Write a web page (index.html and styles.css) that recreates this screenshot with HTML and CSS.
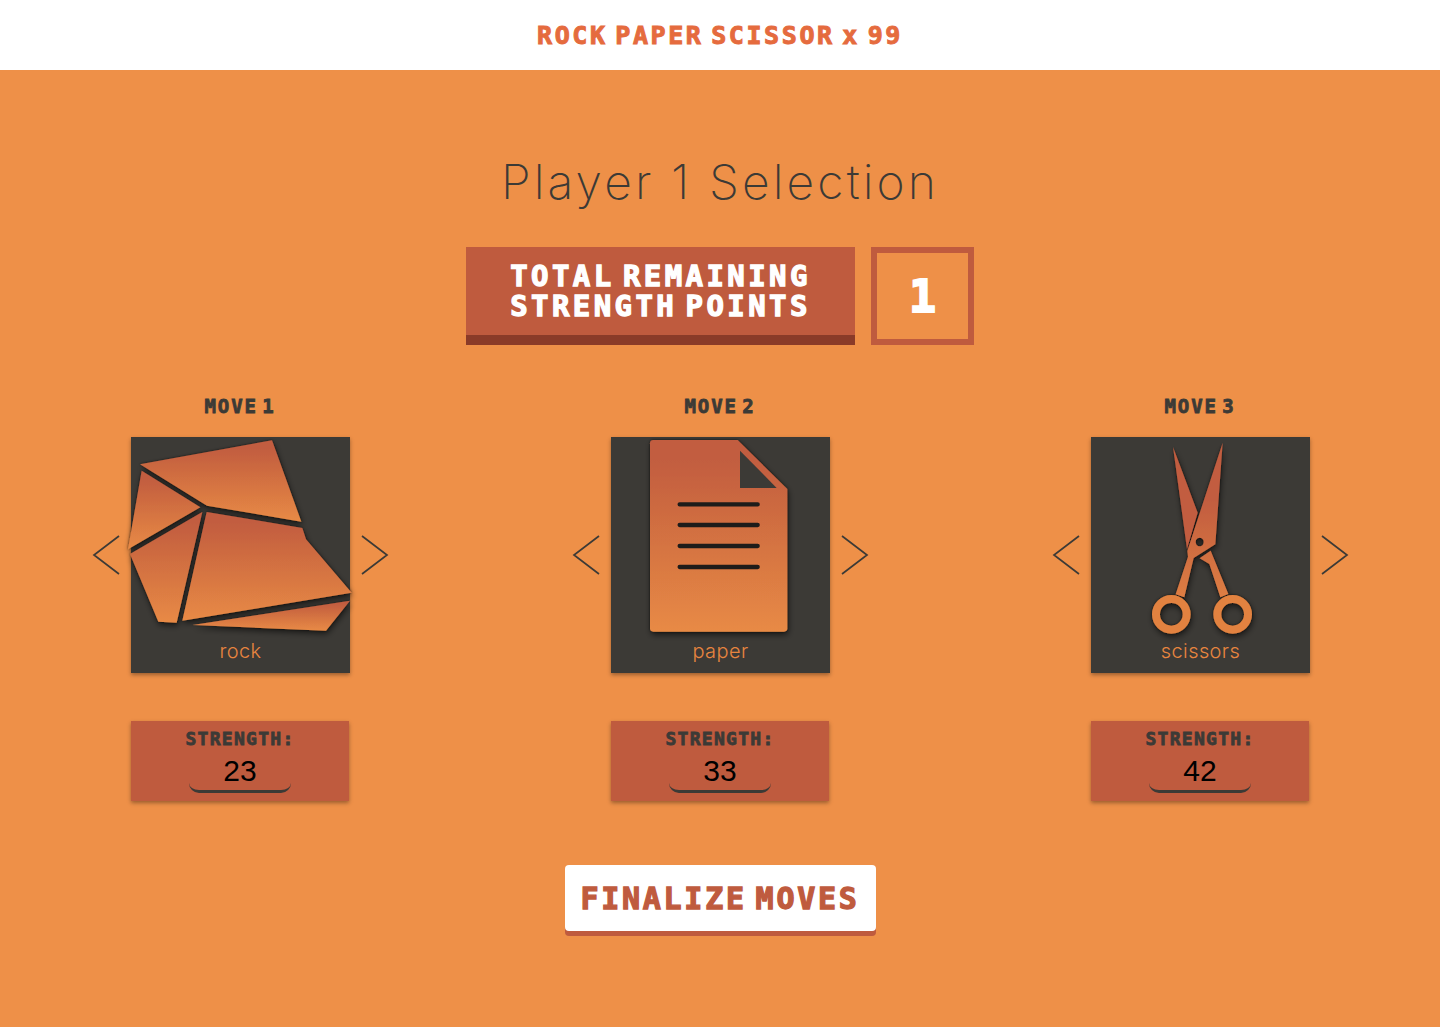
FILE: index.html
```html
<!DOCTYPE html>
<html lang="en">
<head>
<meta charset="utf-8">
<title>Rock Paper Scissor x 99</title>
<link rel="stylesheet" href="styles.css">
</head>
<body>
<header class="topbar"><span class="brand">ROCK PAPER SCISSOR x 99</span></header>
<main class="stage">
  <h1 class="title">Player 1 Selection</h1>
  <section class="points">
    <div class="points-label">TOTAL REMAINING<br>STRENGTH POINTS</div>
    <div class="points-value">1</div>
  </section>
  <section class="moves">
    <article class="move">
      <h2 class="move-title">MOVE 1</h2>
      <div class="picker">
        <svg class="arrow" viewBox="0 0 28 42"><path d="M27 2 2 21 27 40"/></svg>
        <div class="card">
          <svg class="art" viewBox="123 141 657 708">
            <defs>
              <linearGradient id="g" x1="0" y1="0" x2="0" y2="1"><stop offset="0.1" stop-color="#c25d3f"/><stop offset="1" stop-color="#e88a45"/></linearGradient>
              <filter id="s" x="-20%" y="-20%" width="140%" height="140%">
                <feGaussianBlur in="SourceAlpha" stdDeviation="3" result="tight"/>
                <feOffset in="SourceAlpha" dx="4" dy="8" result="moved"/>
                <feGaussianBlur in="moved" stdDeviation="9" result="soft"/>
                <feComponentTransfer in="soft" result="softDim"><feFuncA type="linear" slope=".6"/></feComponentTransfer>
                <feComponentTransfer in="tight" result="tightDim"><feFuncA type="linear" slope=".6"/></feComponentTransfer>
                <feMerge><feMergeNode in="softDim"/><feMergeNode in="tightDim"/><feMergeNode in="SourceGraphic"/></feMerge>
              </filter>
            </defs>
            <g filter="url(#s)" fill="url(#g)">
              <polygon points="150,223 546,151 634,395 351,347"/>
              <polygon points="155,242 331,352 114,478"/>
              <polygon points="337,366 260,698 205,695 120,492"/>
              <polygon points="350,366 637,414 648,448 785,608 277,692"/>
              <polygon points="780,632 708,722 308,705"/>
            </g>
          </svg>
          <span class="card-name">rock</span>
        </div>
        <svg class="arrow" viewBox="0 0 28 42"><path d="M1 2 26 21 1 40"/></svg>
      </div>
      <div class="strength"><span class="strength-label">STRENGTH:</span><div class="strength-input">23</div></div>
    </article>
    <article class="move">
      <h2 class="move-title">MOVE 2</h2>
      <div class="picker">
        <svg class="arrow" viewBox="0 0 28 42"><path d="M27 2 2 21 27 40"/></svg>
        <div class="card">
          <svg class="art" viewBox="123 141 657 708">
            <path filter="url(#s)" fill="url(#g)" d="M250 150H503L652 297V715Q652 725 642 725H250Q240 725 240 715V160Q240 150 250 150Z"/>
            <polygon class="fold" points="510,182 510,294 620,294"/>
            <path class="doc-lines" d="M329 343H563M329 405H563M329 468H563M329 531H563"/>
          </svg>
          <span class="card-name">paper</span>
        </div>
        <svg class="arrow" viewBox="0 0 28 42"><path d="M1 2 26 21 1 40"/></svg>
      </div>
      <div class="strength"><span class="strength-label">STRENGTH:</span><div class="strength-input">33</div></div>
    </article>
    <article class="move">
      <h2 class="move-title">MOVE 3</h2>
      <div class="picker">
        <svg class="arrow" viewBox="0 0 28 42"><path d="M27 2 2 21 27 40"/></svg>
        <div class="card">
          <svg class="art" viewBox="123 141 657 708">
            <defs>
              <linearGradient id="gs" gradientUnits="userSpaceOnUse" x1="0" y1="330" x2="0" y2="735"><stop offset="0" stop-color="#c25d3f"/><stop offset="1" stop-color="#e88a45"/></linearGradient>
            </defs>
            <g filter="url(#s)">
              <polygon fill="#c25d3f" points="369,170 443,368 411,477"/>
              <path fill="url(#gs)" fill-rule="evenodd" d="M518 158 496 463 431 504 403 622 377 613 414 500 412 483Z M449 443a12 13 0 1 0 .1 0Z"/>
              <polygon fill="url(#gs)" points="449,505 482,482 535,612 511,622 478,522"/>
              <circle class="ring" cx="364" cy="673" r="46"/>
              <circle class="ring" cx="548" cy="673" r="46"/>
            </g>
          </svg>
          <span class="card-name">scissors</span>
        </div>
        <svg class="arrow" viewBox="0 0 28 42"><path d="M1 2 26 21 1 40"/></svg>
      </div>
      <div class="strength"><span class="strength-label">STRENGTH:</span><div class="strength-input">42</div></div>
    </article>
  </section>
  <button class="finalize" type="button">FINALIZE MOVES</button>
</main>
</body>
</html>
```
FILE: styles.css
```css
* { box-sizing: border-box; }
html, body { margin: 0; height: 100%; }
body {
  background: #ee9048;
  font-family: "DejaVu Sans Mono", "Liberation Mono", monospace;
  font-weight: 700;
  color: #3c3a36;
}
.topbar {
  height: 70px;
  background: #fff;
  display: flex;
  align-items: center;
  justify-content: center;
}
.brand {
  font-size: 25px;
  letter-spacing: 2.6px;
  word-spacing: -10px;
  color: #e56b3e;
  -webkit-text-stroke: 1px #e56b3e;
}
.stage {
  display: flex;
  flex-direction: column;
  align-items: center;
}
.title {
  margin: 79px 0 0;
  height: 65px;
  line-height: 65px;
  font-family: "Inter", sans-serif;
  font-size: 48px;
  font-weight: 200;
  letter-spacing: 3.1px;
}
.points {
  display: flex;
  gap: 16px;
  margin: 33px 0 0;
  height: 98px;
}
.points-label {
  width: 389px;
  background: #bf5b3e;
  border-bottom: 10px solid #8a3b28;
  color: #fff;
  font-size: 29px;
  line-height: 30px;
  letter-spacing: 3.4px;
  word-spacing: -12.4px;
  -webkit-text-stroke: 1.3px #fff;
  text-align: center;
  padding-top: 14px;
}
.points-value {
  width: 103px;
  border: 6px solid #bf5b3e;
  color: #fff;
  font-size: 45px;
  -webkit-text-stroke: 2px #fff;
  display: flex;
  align-items: center;
  justify-content: center;
}
.moves {
  width: 1440px;
  display: grid;
  grid-template-columns: repeat(3, 480px);
  margin-top: 50px;
}
.move {
  display: flex;
  flex-direction: column;
  align-items: center;
}
.move-title {
  margin: 0;
  height: 22px;
  line-height: 22px;
  font-size: 19px;
  letter-spacing: 1.9px;
  word-spacing: -9px;
  -webkit-text-stroke: 0.8px #3c3a36;
}
.picker {
  display: flex;
  align-items: center;
  gap: 11px;
  margin-top: 20px;
  padding-left: 1px;
}
.arrow {
  width: 28px;
  height: 42px;
  fill: none;
  stroke: #3c3a36;
  stroke-width: 1.7;
}
.card {
  position: relative;
  width: 219px;
  height: 236px;
  background: #3c3a36;
  box-shadow: 0 2px 4px rgba(0, 0, 0, .35);
  display: flex;
  align-items: flex-end;
  justify-content: center;
  padding-bottom: 10px;
}
.art {
  position: absolute;
  left: 0;
  top: 0;
  width: 219px;
  height: 236px;
  overflow: visible;
}
.card-name {
  position: relative;
  font-family: "Inter", sans-serif;
  font-size: 20px;
  font-weight: 300;
  line-height: 24px;
  letter-spacing: 0.4px;
  color: #e8853f;
}
.fold { fill: #3c3a36; }
.doc-lines {
  fill: none;
  stroke: #1e1c1a;
  stroke-width: 13;
  stroke-linecap: round;
}
.ring {
  fill: none;
  stroke: #e2823f;
  stroke-width: 24;
}
.strength {
  width: 218px;
  height: 80px;
  margin-top: 48px;
  background: #bf5b3e;
  box-shadow: 0 2px 4px rgba(0, 0, 0, .35);
  display: flex;
  flex-direction: column;
  align-items: center;
  padding-top: 8px;
}
.strength-label {
  font-size: 18px;
  line-height: 20px;
  letter-spacing: 1.3px;
  -webkit-text-stroke: 0.8px #3c3a36;
}
.strength-input {
  width: 102px;
  height: 44px;
  font-family: "Liberation Sans", sans-serif;
  font-size: 30px;
  font-weight: 400;
  line-height: 44px;
  color: #000;
  text-align: center;
  border-bottom: 3px solid #3c3a36;
  border-radius: 0 0 10px 10px;
}
.finalize {
  width: 311px;
  height: 66px;
  margin-top: 64px;
  border: 0;
  border-radius: 4px;
  background: #fff;
  box-shadow: 0 5px 0 #bf5b3e;
  color: #bf5b3e;
  font-family: inherit;
  font-size: 30px;
  font-weight: 700;
  letter-spacing: 2.7px;
  word-spacing: -11.8px;
  -webkit-text-stroke: 1.3px #bf5b3e;
}
```
